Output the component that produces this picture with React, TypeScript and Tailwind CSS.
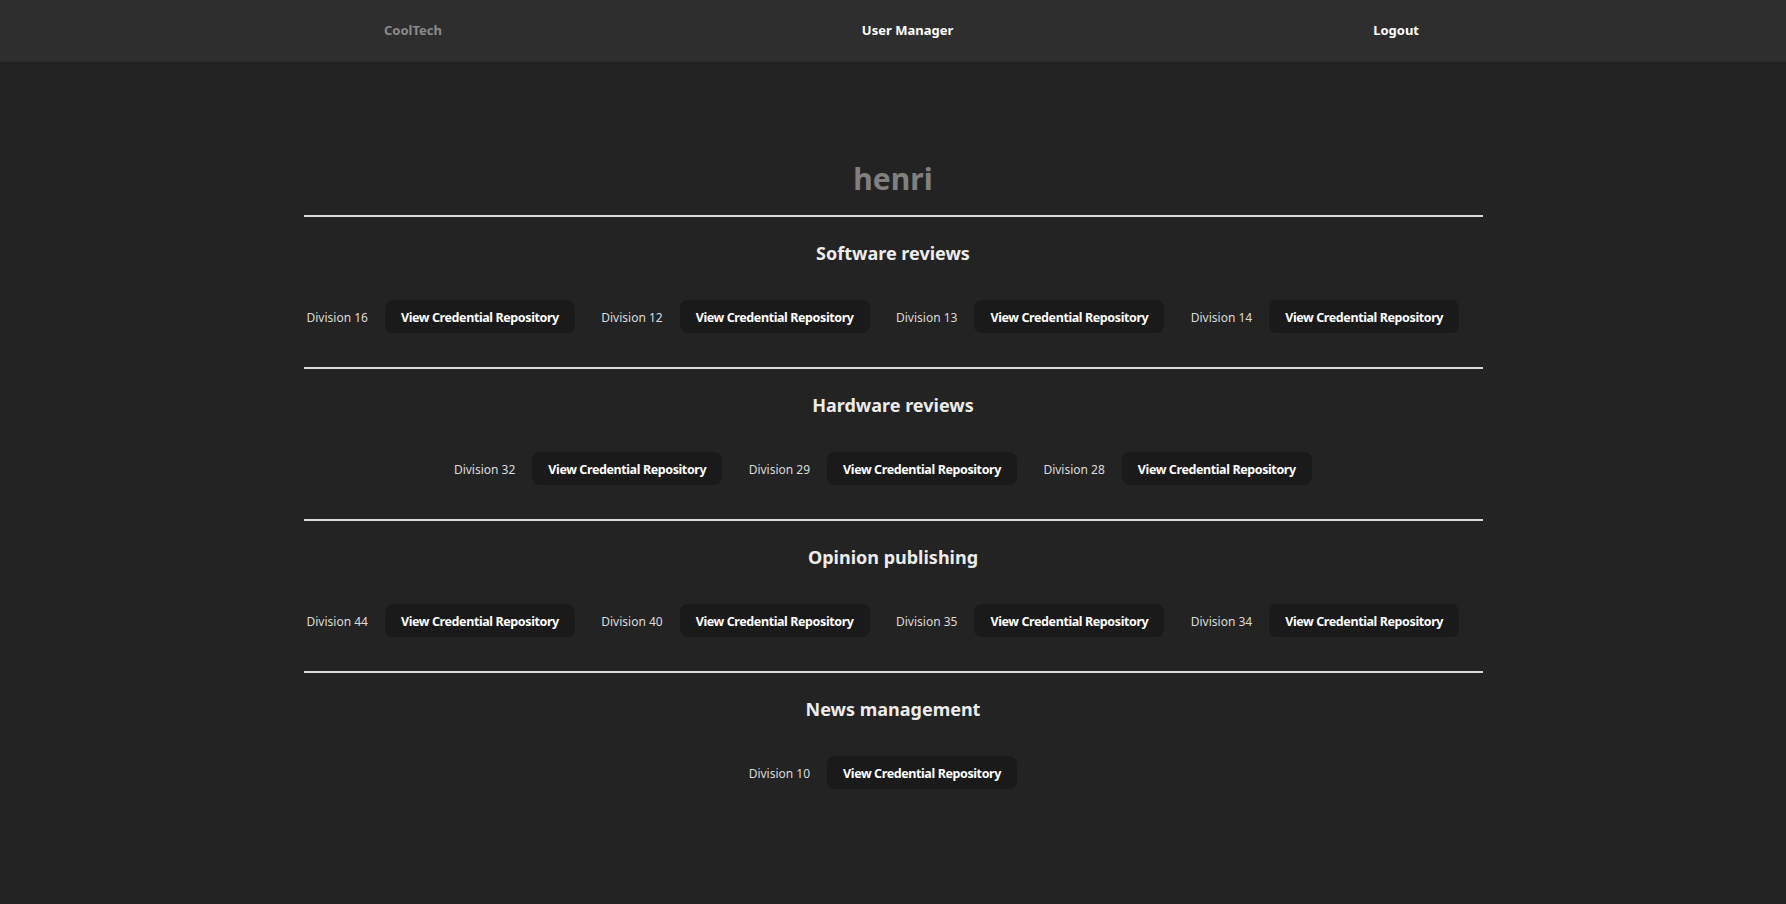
const SECTIONS: { title: string; divisions: number[] }[] = [
  { title: 'Software reviews', divisions: [16, 12, 13, 14] },
  { title: 'Hardware reviews', divisions: [32, 29, 28] },
  { title: 'Opinion publishing', divisions: [44, 40, 35, 34] },
  { title: 'News management', divisions: [10] },
];

function DivisionItem({ id }: { id: number }) {
  return (
    <div className="flex w-1/4 items-center pl-[3px] whitespace-nowrap">
      <span className="shrink-0 pt-[3px] text-[12px] text-[#dcdcdc]">Division {id}</span>
      <button
        type="button"
        className="ml-[17px] h-[33px] shrink-0 rounded-lg bg-[#1a1a1a] px-[16px] pt-[3px] text-[12.5px] font-bold tracking-[-0.4px] text-white"
      >
        View Credential Repository
      </button>
    </div>
  );
}

export default function App() {
  return (
    <div
      className="min-h-[904px] bg-[#232323] text-white"
      style={{ fontFamily: '"Noto Sans", "Open Sans", sans-serif' }}
    >
      <nav className="flex h-[62px] items-center justify-around bg-[#2e2e2e] pl-[174px] pr-[157px] text-[13px] font-bold">
        <a className="text-[#8a8a8a]">CoolTech</a>
        <a className="text-white">User Manager</a>
        <a className="text-white">Logout</a>
      </nav>

      <main className="mx-auto w-[1179px] pt-[97px]">
        <h1 className="text-center text-[30px] leading-[40px] font-bold text-[#808080]">henri</h1>
        <div className="mt-4">
          {SECTIONS.map((section) => (
            <section key={section.title}>
              <hr className="h-[2px] border-0 bg-[#dcdcdc]" />
              <h3 className="mt-6 text-center text-[18px] leading-6 font-bold text-[#ececec]">
                {section.title}
              </h3>
              <div className="mt-[35px] mb-[34px] flex flex-wrap justify-center">
                {section.divisions.map((d) => (
                  <DivisionItem key={d} id={d} />
                ))}
              </div>
            </section>
          ))}
        </div>
      </main>
    </div>
  );
}
